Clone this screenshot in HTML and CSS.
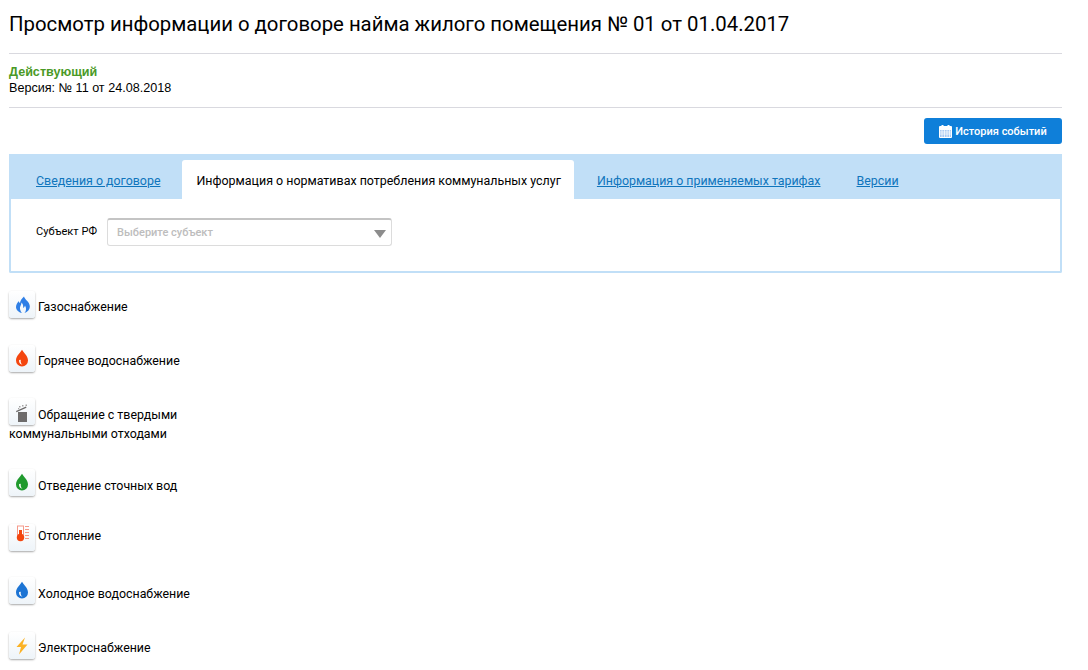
FILE: index.html
```html
<!DOCTYPE html>
<html lang="ru">
<head>
<meta charset="utf-8">
<title>Просмотр информации о договоре</title>
<link rel="stylesheet" href="styles.css">
</head>
<body>
<h1 class="title">Просмотр информации о договоре найма жилого помещения № 01 от 01.04.2017</h1>
<div class="status">
  <div class="status-active">Действующий</div>
  <div class="status-version">Версия: № 11 от 24.08.2018</div>
</div>
<div class="actions">
  <a class="btn" href="#">
    <svg class="btn-icon" width="13" height="13" viewBox="0 0 13 13"><rect x="0" y="1" width="13" height="12" rx="1" fill="#fff"/><rect x="1" y="5" width="11" height="7" fill="#a9c9f2"/><path d="M1 7h11M1 9h11M3 5v7M5.500 5v7M8 5v7M10.500 5v7" stroke="#fff" stroke-width=".7"/><rect x="2.500" y="0" width="2" height="3" fill="#fff"/><rect x="8.500" y="0" width="2" height="3" fill="#fff"/></svg>
    История событий
  </a>
</div>
<section class="panel">
  <nav class="tabs">
    <a class="tab" href="#">Сведения о договоре</a>
    <span class="tab tab-active">Информация о нормативах потребления коммунальных услуг</span>
    <a class="tab" href="#">Информация о применяемых тарифах</a>
    <a class="tab" href="#">Версии</a>
  </nav>
  <div class="filter">
    <span class="filter-label">Субъект РФ</span>
    <div class="select"><span>Выберите субъект</span><i class="select-arrow"></i></div>
  </div>
</section>
<ul class="services">
  <li class="service gap-54"><span class="ico"><svg width="18" height="20" viewBox="0 0 18 20"><path d="M11 1.500C11.500 4.500 16.500 6.500 16.800 11 17 14.500 14.500 17 11.500 18 13.500 15.500 13.500 13 12 10.500 11.500 12 11 12.500 10 13 10.500 11 10 9 8.500 7.500 8.500 10 6.500 11.500 7 14 7.300 15.500 8 17 9 18 5.500 17.300 3 15 3 12 3 9.500 4.500 8 5.500 6 5.800 7 6.200 7.500 7 8 7.200 5.500 9 3.500 11 1.500Z" fill="#2f7fe6"/></svg></span>Газоснабжение</li>
  <li class="service gap-53"><span class="ico"><svg width="18" height="20" viewBox="0 0 18 20"><path d="M9 .8C10.500 3.500 15 7 15 11.500A6 6 0 0 1 3 11.500C3 7 7.500 3.500 9 .8Z" fill="#f4460f"/><path d="M6 11.500c0 2.500 1.500 4 3.500 4.200-1.300-1-2-2.200-1.800-4.700-.5-.7-1.500-.3-1.700.5z" fill="#fff"/></svg></span>Горячее водоснабжение</li>
  <li class="service service-two service-low gap-52"><span class="ico"><svg width="18" height="20" viewBox="0 0 18 20"><path d="M5 10h9v10H5z" fill="#6d6b6b"/><path d="M3 9 13 4.500l.5 1.200L3.500 10.200z" fill="#6d6b6b"/><path d="M6 4h1.500v1.500H6zM9 3h1.500v1.500H9zM12.500 2.500h1.500V4h-1.500zM5 6h1.200v1.200H5z" fill="#a5a3a3"/></svg></span>Обращение с твердыми коммунальными отходами</li>
  <li class="service service-low gap-55"><span class="ico"><svg width="18" height="20" viewBox="0 0 18 20"><path d="M9 .8C10.500 3.500 15 7 15 11.500A6 6 0 0 1 3 11.500C3 7 7.500 3.500 9 .8Z" fill="#1f9a2e"/><path d="M6 11.500c0 2.500 1.500 4 3.500 4.200-1.300-1-2-2.200-1.800-4.700-.5-.7-1.500-.3-1.700.5z" fill="#fff"/></svg></span>Отведение сточных вод</li>
  <li class="service gap-53 service-high"><span class="ico"><svg width="18" height="26" viewBox="0 0 18 26"><rect x="4.500" y="1" width="6" height="9" fill="#fff" stroke="#f59a8a"/><rect x="6" y="5" width="3" height="7" fill="#f4460f"/><circle cx="7.500" cy="12.500" r="3.700" fill="#f4460f"/><path d="M12 1.500h4M12 4.500h4M12 7.500h4M12 10.500h4M12 13.500h4" stroke="#f59a8a"/></svg></span>Отопление</li>
  <li class="service service-low gap-55"><span class="ico"><svg width="18" height="20" viewBox="0 0 18 20"><path d="M9 .8C10.500 3.500 15 7 15 11.500A6 6 0 0 1 3 11.500C3 7 7.500 3.500 9 .8Z" fill="#1c74d4"/><path d="M6 11.500c0 2.500 1.500 4 3.500 4.200-1.300-1-2-2.200-1.800-4.700-.5-.7-1.500-.3-1.700.5z" fill="#fff"/></svg></span>Холодное водоснабжение</li>
  <li class="service"><span class="ico"><svg width="18" height="20" viewBox="0 0 18 20"><path d="M12 1.500 3.500 11h4.500L6 18.500 14.500 8.500H9.500z" fill="#fbb225"/></svg></span>Электроснабжение</li>
</ul>
</body>
</html>
```

FILE: styles.css
```css
* { box-sizing: border-box; }
html, body { margin: 0; padding: 0; }
body {
  width: 1088px;
  height: 670px;
  overflow: hidden;
  padding: 0 26px 0 9px;
  background: #fff;
  color: #000;
  font-family: Roboto, "Liberation Sans", sans-serif;
  font-size: 12px;
}
.title {
  margin: 0;
  height: 54px;
  padding-top: 11px;
  border-bottom: 1px solid #d9d9df;
  font-size: 20.350px;
  line-height: 26px;
  font-weight: 400;
}
.status {
  height: 54px;
  padding-top: 10px;
  border-bottom: 1px solid #d9d9df;
  font-family: "Liberation Sans", Arial, sans-serif;
  font-size: 12.600px;
  line-height: 16px;
}
.status-active { color: #4a9a26; font-weight: 700; }
.actions {
  display: flex;
  justify-content: flex-end;
  padding-top: 10px;
  height: 46px;
}
.btn {
  display: flex;
  align-items: center;
  justify-content: center;
  gap: 3px;
  width: 138px;
  height: 26px;
  border-radius: 3px;
  background: #0f7fd9;
  color: #fff;
  font-size: 11px;
  font-weight: 500;
  text-decoration: none;
}
.panel {
  height: 119px;
  border: 2px solid #c1dff7;
  border-top: 0;
  border-radius: 0 0 2px 2px;
}
.tabs {
  display: flex;
  align-items: flex-end;
  height: 45px;
  margin: 0 -2px;
  padding-left: 9px;
  background: #c1dff7;
  font-size: 12.400px;
}
.tab {
  padding: 0 18px;
  height: 39px;
  line-height: 41px;
  color: #0f75bc;
}
.tab-active {
  margin: 0 5px 0 4px;
  padding: 0 13px 0 14px;
  background: #fff;
  color: #000;
  font-size: 12.450px;
  border-radius: 3px 3px 0 0;
}
.filter {
  display: flex;
  align-items: center;
  gap: 10px;
  padding: 19px 0 0 25px;
}
.filter-label { font-size: 11.100px; padding-bottom: 2px; }
.select {
  position: relative;
  width: 285px;
  height: 28px;
  padding-left: 9px;
  border: 1px solid #dcdcdc;
  border-top: 2px solid #c4c4c4;
  border-radius: 3px;
  color: #bdbdbd;
  font-size: 11px;
  font-weight: 500;
  line-height: 25px;
}
.select-arrow {
  position: absolute;
  right: 5px;
  top: 10px;
  border-left: 6px solid transparent;
  border-right: 6px solid transparent;
  border-top: 8px solid #8c8c8c;
}
.services {
  list-style: none;
  margin: 18px 0 0;
  padding: 0;
  width: 190px;
  font-size: 12.400px;
  line-height: 18px;
}
.gap-52 { margin-bottom: 27px; }
.gap-53 { margin-bottom: 25px; }
.gap-54 { margin-bottom: 26px; }
.gap-55 { margin-bottom: 27px; }
.service { height: 28px; }
.service-two { height: 44px; }
.ico {
  display: inline-flex;
  align-items: center;
  justify-content: center;
  width: 26px;
  height: 27px;
  margin-right: 3px;
  vertical-align: -4px;
  border-radius: 3px;
  background: linear-gradient(#fff, #eef4f9);
  box-shadow: 0 1px 2px rgba(0,0,0,.35);
}
.service-low .ico { vertical-align: -3px; }
.service-high .ico { vertical-align: -11px; }
```
